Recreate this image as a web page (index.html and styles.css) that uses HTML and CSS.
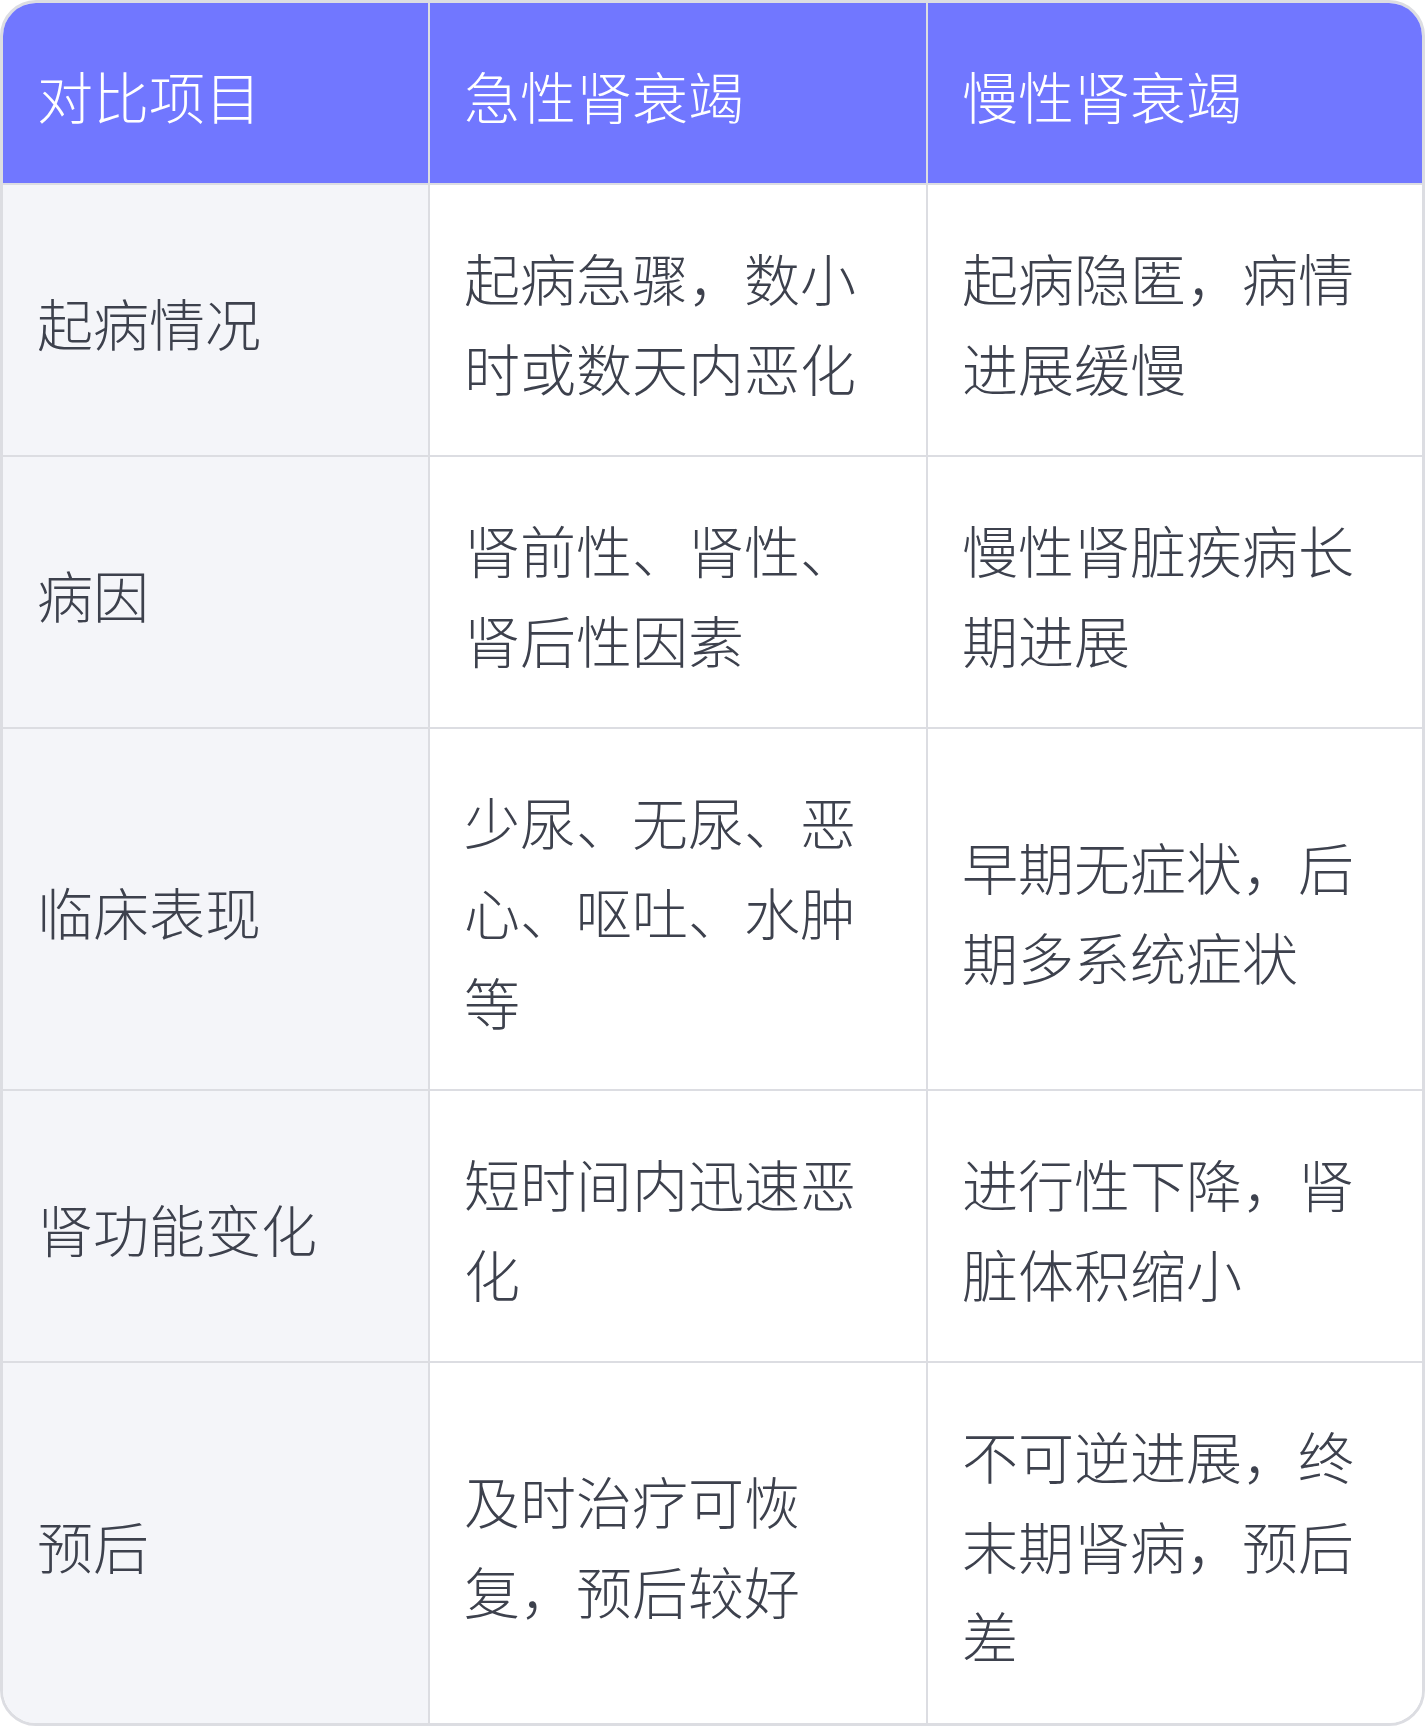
FILE: index.html
```html
<!DOCTYPE html>
<html lang="zh-CN">
<head>
<meta charset="utf-8">
<title>急性肾衰竭与慢性肾衰竭对比</title>
<link rel="stylesheet" href="styles.css">
</head>
<body>
<div class="frame">
  <table class="cmp">
    <colgroup>
      <col class="c1">
      <col class="c2">
      <col class="c3">
    </colgroup>
    <thead>
      <tr>
        <th>对比项目</th>
        <th>急性肾衰竭</th>
        <th>慢性肾衰竭</th>
      </tr>
    </thead>
    <tbody>
      <tr>
        <td class="label">起病情况</td>
        <td>起病急骤，数小时或数天内恶化</td>
        <td>起病隐匿，病情进展缓慢</td>
      </tr>
      <tr>
        <td class="label">病因</td>
        <td>肾前性、肾性、肾后性因素</td>
        <td>慢性肾脏疾病长期进展</td>
      </tr>
      <tr>
        <td class="label">临床表现</td>
        <td>少尿、无尿、恶心、呕吐、水肿等</td>
        <td>早期无症状，后期多系统症状</td>
      </tr>
      <tr>
        <td class="label">肾功能变化</td>
        <td>短时间内迅速恶化</td>
        <td>进行性下降，肾脏体积缩小</td>
      </tr>
      <tr class="last">
        <td class="label">预后</td>
        <td>及时治疗可恢复，预后较好</td>
        <td>不可逆进展，终末期肾病，预后差</td>
      </tr>
    </tbody>
  </table>
</div>
</body>
</html>
```

FILE: styles.css
```css
html, body {
  margin: 0;
  padding: 0;
  background: #ffffff;
}

body {
  font-family: "Noto Sans CJK SC", "Noto Sans", sans-serif;
}

.frame {
  width: 1425px;
  height: 1726px;
  box-sizing: border-box;
  border: 3px solid #dcdde2;
  border-radius: 36px;
  overflow: hidden;
  background: #ffffff;
}

.cmp {
  width: 1419px;
  border-collapse: separate;
  border-spacing: 0;
  table-layout: fixed;
}

.c1 { width: 427px; }
.c2 { width: 498px; }
.c3 { width: 494px; }

.cmp th,
.cmp td {
  box-sizing: border-box;
  padding: 47px 34px 43px;
  font-size: 56px;
  line-height: 90px;
  font-weight: 300;
  text-align: left;
  vertical-align: middle;
  border-right: 2px solid #dcdde2;
  border-bottom: 2px solid #dcdde2;
  word-break: break-all;
}

.cmp th:last-child,
.cmp td:last-child {
  border-right: none;
}

.cmp tr.last td {
  border-bottom: none;
}

.cmp th {
  background: #7177ff;
  color: #ffffff;
}

.cmp td {
  color: #3d414d;
  background: #ffffff;
}

.cmp td.label {
  background: #f4f5f9;
}
```
